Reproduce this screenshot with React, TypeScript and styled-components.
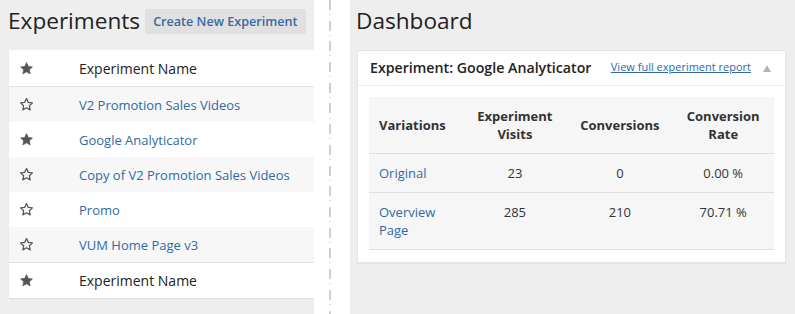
import React from "react";
import styled, { createGlobalStyle } from "styled-components";

const GlobalStyle = createGlobalStyle`
  html, body {
    margin: 0;
    padding: 0;
    background: #eeeeee;
    font-family: "Open Sans", "Liberation Sans", sans-serif;
    color: #333;
  }
`;

const Page = styled.div`
  display: flex;
  width: 795px;
  height: 314px;
  overflow: hidden;
`;

const Column = styled.div<{ $width?: number }>`
  background: #eeeeee;
  ${(p) => (p.$width ? `width: ${p.$width}px; flex: none;` : "flex: 1;")}
  overflow: hidden;
  padding-left: ${(p) => (p.$width ? 9 : 7)}px;
  padding-right: ${(p) => (p.$width ? 0 : 9)}px;
  box-sizing: border-box;
`;

const Gutter = styled.div`
  width: 36px;
  flex: none;
  background: #fff;
  display: flex;
  justify-content: center;
  padding-right: 4px;
  box-sizing: border-box;
`;

const DashLine = styled.div`
  width: 2px;
  height: 100%;
  background: repeating-linear-gradient(
    to bottom,
    #cfcfcf 0px,
    #cfcfcf 10px,
    transparent 10px,
    transparent 14px,
    #dddddd 14px,
    #dddddd 15px,
    transparent 15px,
    transparent 20.7px
  );
`;

const TitleRow = styled.div`
  display: flex;
  align-items: center;
  gap: 5px;
  height: 50px;
  margin-left: -1px;
`;

const Title = styled.h1`
  margin: 0 0 9px;
  font-size: 22.6px;
  font-weight: 400;
  color: #222;
  line-height: 30px;
`;

const Button = styled.button`
  font-family: "Open Sans", "Liberation Sans", sans-serif;
  height: 25px;
  margin-bottom: 8px;
  padding: 0 8px;
  border: none;
  border-radius: 2px;
  background: #e0e0e0;
  color: #376b9e;
  font-size: 12.6px;
  font-weight: 600;
`;

const ListTable = styled.div`
  width: 330px;
  background: #fff;
  box-shadow: 0 1px 1px rgba(0, 0, 0, 0.06);
`;

const ListRow = styled.div<{ $striped?: boolean; $divider?: boolean }>`
  display: flex;
  align-items: center;
  height: 35px;
  background: ${(p) => (p.$striped ? "#f7f7f7" : "#fff")};
  border-bottom: ${(p) => (p.$divider ? "1px solid #e1e1e1" : "none")};
`;

const StarCell = styled.div`
  width: 70px;
  padding-left: 10px;
  display: flex;
  align-items: center;
  box-sizing: border-box;
`;

const NameHead = styled.span`
  font-size: 14px;
  color: #222;
`;

const NameLink = styled.a`
  font-size: 13px;
  color: #2f6ba2;
  text-decoration: none;
`;

const Star: React.FC<{ filled?: boolean }> = ({ filled }) => (
  <svg width="15" height="15" viewBox="0 0 24 24">
    <path
      d="M12 2.5l2.9 6.1 6.6.8-4.9 4.6 1.3 6.6L12 17.3l-5.9 3.3 1.3-6.6-4.9-4.6 6.6-.8z"
      fill={filled ? "#555" : "none"}
      stroke="#555"
      strokeWidth={filled ? 1 : 2}
      strokeLinejoin="round"
    />
  </svg>
);

const Card = styled.div`
  background: #fff;
  border: 1px solid #e5e5e5;
  box-shadow: 0 1px 1px rgba(0, 0, 0, 0.04);
`;

const CardHeader = styled.div`
  display: flex;
  align-items: center;
  height: 34px;
  padding: 0 12px;
  border-bottom: 1px solid #eeeeee;
`;

const CardTitle = styled.h2`
  margin: -2px 0 0;
  flex: 1;
  font-size: 14.2px;
  font-weight: 600;
  color: #222;
`;

const ReportLink = styled.a`
  font-size: 11px;
  color: #2f6ba2;
  text-decoration: underline;
  margin-top: -4px;
`;

const Toggle = styled.span`
  width: 0;
  height: 0;
  margin-left: 12px;
  margin-right: 2px;
  border-left: 4.5px solid transparent;
  border-right: 4.5px solid transparent;
  border-bottom: 7px solid #b4b4b4;
`;

const CardBody = styled.div`
  padding: 11px 11px 12px;
`;

const StatsTable = styled.table`
  width: 100%;
  border-collapse: collapse;
  background: #f6f6f6;
  font-size: 13px;
`;

const Th = styled.th<{ $left?: boolean; $width: number }>`
  width: ${(p) => p.$width}px;
  padding: 10px 10px;
  line-height: 18px;
  font-weight: 700;
  color: #333;
  text-align: ${(p) => (p.$left ? "left" : "center")};
  border-bottom: 1px solid #dedede;
`;

const Td = styled.td<{ $left?: boolean }>`
  padding: 10px 10px;
  line-height: 18px;
  vertical-align: top;
  color: #333;
  text-align: ${(p) => (p.$left ? "left" : "center")};
  border-bottom: 1px solid #dedede;
`;

const VariationLink = styled.a`
  color: #2f6ba2;
  text-decoration: none;
`;

const experiments = [
  { name: "V2 Promotion Sales Videos", starred: false },
  { name: "Google Analyticator", starred: true },
  { name: "Copy of V2 Promotion Sales Videos", starred: false },
  { name: "Promo", starred: false },
  { name: "VUM Home Page v3", starred: false },
];

const variations = [
  { name: "Original", visits: 23, conversions: 0, rate: "0.00 %" },
  { name: "Overview Page", visits: 285, conversions: 210, rate: "70.71 %" },
];

export default function App() {
  return (
    <>
      <GlobalStyle />
      <Page>
        <Column $width={314}>
          <TitleRow>
            <Title>Experiments</Title>
            <Button>Create New Experiment</Button>
          </TitleRow>
          <ListTable>
            <ListRow $divider style={{ height: 36 }}>
              <StarCell>
                <Star filled />
              </StarCell>
              <NameHead>Experiment Name</NameHead>
            </ListRow>
            {experiments.map((exp, index) => (
              <ListRow
                key={exp.name}
                $striped={index % 2 === 0}
                $divider={index === experiments.length - 1}
              >
                <StarCell>
                  <Star filled={exp.starred} />
                </StarCell>
                <NameLink href="#">{exp.name}</NameLink>
              </ListRow>
            ))}
            <ListRow>
              <StarCell>
                <Star filled />
              </StarCell>
              <NameHead>Experiment Name</NameHead>
            </ListRow>
          </ListTable>
        </Column>
        <Gutter>
          <DashLine />
        </Gutter>
        <Column>
          <TitleRow>
            <Title>Dashboard</Title>
          </TitleRow>
          <Card>
            <CardHeader>
              <CardTitle>Experiment: Google Analyticator</CardTitle>
              <ReportLink href="#">View full experiment report</ReportLink>
              <Toggle />
            </CardHeader>
            <CardBody>
              <StatsTable>
                <thead>
                  <tr>
                    <Th $left $width={91}>
                      Variations
                    </Th>
                    <Th $width={110}>
                      Experiment
                      <br />
                      Visits
                    </Th>
                    <Th $width={100}>Conversions</Th>
                    <Th $width={104}>
                      Conversion
                      <br />
                      Rate
                    </Th>
                  </tr>
                </thead>
                <tbody>
                  {variations.map((v) => (
                    <tr key={v.name}>
                      <Td $left>
                        <VariationLink href="#">
                          {v.name === "Overview Page" ? (
                            <>
                              Overview
                              <br />
                              Page
                            </>
                          ) : (
                            v.name
                          )}
                        </VariationLink>
                      </Td>
                      <Td>{v.visits}</Td>
                      <Td>{v.conversions}</Td>
                      <Td>{v.rate}</Td>
                    </tr>
                  ))}
                </tbody>
              </StatsTable>
            </CardBody>
          </Card>
        </Column>
      </Page>
    </>
  );
}
